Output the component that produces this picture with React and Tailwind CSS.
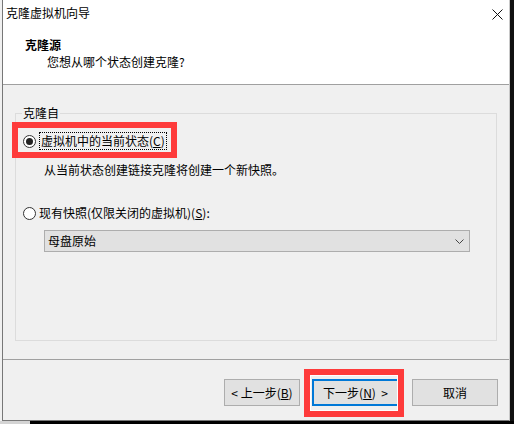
import React from "react";

const font = { fontFamily: '"Noto Sans CJK SC", "Microsoft YaHei", sans-serif' };

function Radio({ checked }) {
  return (
    <div className="w-[13px] h-[13px] rounded-full border border-[#333] bg-white flex items-center justify-center shrink-0">
      {checked && <div className="w-[7px] h-[7px] rounded-full bg-[#222]" />}
    </div>
  );
}

function Button({ children, primary }) {
  return (
    <div
      className={`h-[27px] flex items-center justify-center text-[12px] text-black bg-[#e1e1e1] ${
        primary ? "w-[87px] border-2 border-[#0078d7]" : "border border-[#adadad]"
      }`}
    >
      {children}
    </div>
  );
}

export default function App() {
  return (
    <div
      className="relative w-[514px] h-[424px] flex flex-col bg-[#f0f0f0] overflow-hidden text-black"
      style={font}
    >
      <div className="flex h-[421px]">
        <div className="w-[2px] bg-[#f0f0f0]" />
        <div className="w-[508px] flex flex-col border-l border-b border-[#777] border-r-[#c8c8c8] border-r">
          {/* Title bar + header */}
          <div className="h-[84px] bg-white flex flex-col">
            <div className="h-[30px] flex items-start justify-between pt-[5px] pl-[3px] pr-[6px]">
              <span className="text-[12px] leading-[16px]">克隆虚拟机向导</span>
              <svg width="11" height="11" viewBox="0 0 11 11" className="mt-[4px]">
                <path d="M0.5 0.5 L10.5 10.5 M10.5 0.5 L0.5 10.5" stroke="#111" strokeWidth="1" />
              </svg>
            </div>
            <div className="pl-[22px] pt-[7px] text-[12px] leading-[16px] font-bold">克隆源</div>
            <div className="pl-[44px] pt-[1px] text-[12px] leading-[16px]">您想从哪个状态创建克隆?</div>
          </div>
          <div className="h-px bg-[#a0a0a0]" />

          {/* Body */}
          <div className="h-[274px] pt-[28px] pl-[12px] pr-[12px]">
            <div className="relative h-[228px] border border-[#dcdcdc] pt-[17px]">
              <span className="absolute left-[6px] top-[-9px] px-[1px] bg-[#f0f0f0] text-[12px] leading-[16px]">
                克隆自
              </span>
              <div className="h-[20px] flex items-center pl-[7px] gap-[2px]">
                <Radio checked />
                <span className="ml-[1px] px-[1px] h-[18px] flex items-center border border-dotted border-black text-[12px] leading-[16px]">
                  虚拟机中的当前状态(<span className="underline">C</span>)
                </span>
              </div>
              <div className="mt-[11px] pl-[28px] text-[12px] leading-[16px]">
                从当前状态创建链接克隆将创建一个新快照。
              </div>
              <div className="mt-[25px] h-[20px] flex items-center pl-[7px] gap-[3px]">
                <Radio />
                <span className="text-[12px] leading-[16px]">
                  现有快照(仅限关闭的虚拟机)(<span className="underline">S</span>):
                </span>
              </div>
              <div className="mt-[7px] ml-[28px] w-[426px] h-[22px] flex items-center justify-between bg-[#e1e1e1] border border-[#adadad] pl-[3px] pr-[5px]">
                <span className="text-[12px] leading-[16px]">母盘原始</span>
                <svg width="9" height="5" viewBox="0 0 9 5">
                  <path d="M0.5 0.5 L4.5 4.5 L8.5 0.5" stroke="#444" fill="none" strokeWidth="1" />
                </svg>
              </div>
            </div>
          </div>
          <div className="h-px bg-[#a0a0a0]" />

          {/* Footer */}
          <div className="h-[60px] flex items-start justify-end pt-[19px] pr-[11px]">
            <div className="w-[76px]">
              <Button>
                &lt; 上一步(<span className="underline">B</span>)
              </Button>
            </div>
            <div className="ml-[12px]">
              <Button primary>
                下一步(<span className="underline">N</span>) &nbsp;&gt;
              </Button>
            </div>
            <div className="ml-[13px] w-[86px]">
              <Button>取消</Button>
            </div>
          </div>
        </div>
        <div className="w-[4px] bg-[#111]" />
      </div>
      <div className="flex h-[3px]">
        <div className="w-[30px] bg-[#d4d4d4]" />
        <div className="flex-1 bg-black" />
      </div>

      {/* Annotation boxes */}
      <div className="absolute left-[12px] top-[122px] w-[165px] h-[36px] border-[6px] border-[#fe3b3b]" />
      <div className="absolute left-[304px] top-[369px] w-[100px] h-[48px] border-[6px] border-[#fe3b3b] shadow-[inset_0_0_0_1px_#fff]" />
    </div>
  );
}
